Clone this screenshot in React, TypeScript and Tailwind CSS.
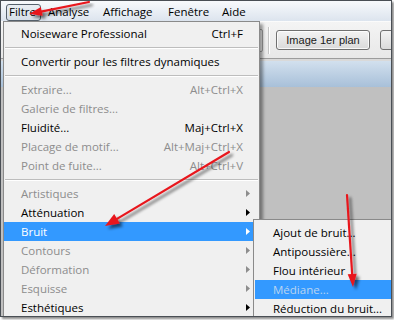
import React from "react";

const FONT = { fontFamily: '"Open Sans", "Noto Sans", Arial, sans-serif' };

type Item =
  | { kind: "sep" }
  | {
      kind: "item";
      label: string;
      shortcut?: string;
      disabled?: boolean;
      sub?: boolean;
      active?: boolean;
    };

const mainItems: Item[] = [
  { kind: "item", label: "Noiseware Professional", shortcut: "Ctrl+F" },
  { kind: "sep" },
  { kind: "item", label: "Convertir pour les filtres dynamiques" },
  { kind: "sep" },
  { kind: "item", label: "Extraire...", shortcut: "Alt+Ctrl+X", disabled: true },
  { kind: "item", label: "Galerie de filtres...", disabled: true },
  { kind: "item", label: "Fluidité...", shortcut: "Maj+Ctrl+X" },
  { kind: "item", label: "Placage de motif...", shortcut: "Alt+Maj+Ctrl+X", disabled: true },
  { kind: "item", label: "Point de fuite...", shortcut: "Alt+Ctrl+V", disabled: true },
  { kind: "sep" },
  { kind: "item", label: "Artistiques", sub: true, disabled: true },
  { kind: "item", label: "Atténuation", sub: true },
  { kind: "item", label: "Bruit", sub: true, active: true },
  { kind: "item", label: "Contours", sub: true, disabled: true },
  { kind: "item", label: "Déformation", sub: true, disabled: true },
  { kind: "item", label: "Esquisse", sub: true, disabled: true },
  { kind: "item", label: "Esthétiques", sub: true },
];

const subItems = [
  { label: "Ajout de bruit..." },
  { label: "Antipoussière..." },
  { label: "Flou intérieur" },
  { label: "Médiane...", active: true },
  { label: "Réduction du bruit..." },
];

function SubArrow({ color }: { color: string }) {
  return (
    <svg width="4" height="7" viewBox="0 0 4 7" className="block">
      <polygon points="0,0 4,3.5 0,7" fill={color} />
    </svg>
  );
}

function Arrow({ x1, y1, x2, y2, hl = 13, hw = 5 }: { x1: number; y1: number; x2: number; y2: number; hl?: number; hw?: number }) {
  const dx = x2 - x1;
  const dy = y2 - y1;
  const len = Math.hypot(dx, dy);
  const ux = dx / len;
  const uy = dy / len;
  const bx = x2 - ux * hl;
  const by = y2 - uy * hl;
  const px = -uy;
  const py = ux;
  const pts = `${x2},${y2} ${bx + px * hw},${by + py * hw} ${bx - px * hw},${by - py * hw}`;
  return (
    <g filter="url(#arrowShadow)">
      <line x1={x1} y1={y1} x2={bx + ux * 2} y2={by + uy * 2} stroke="#e8161c" strokeWidth="2.2" strokeLinecap="round" />
      <polygon points={pts} fill="#e8161c" />
    </g>
  );
}

export default function App() {
  return (
    <div className="relative w-[394px] h-[320px] bg-white overflow-hidden" style={FONT}>
      {/* framed screenshot */}
      <div className="relative w-[392px] h-[317px] border border-[#4a4f55] shadow-[2px_2px_2px_rgba(0,0,0,0.45)] overflow-hidden bg-[#c0c0c0] flex flex-col">
        {/* menubar */}
        <div className="h-[20px] shrink-0 flex items-end bg-gradient-to-b from-[#f8fafc] to-[#dce4ee] text-[11.5px] text-black">
          <div className="shrink-0 ml-[5px] w-[35px] h-[17px] rounded-[3px] border border-[#56616c] bg-gradient-to-b from-[#e9eef3] to-[#d6dee7] flex items-center pl-[2px] pb-[1px]">
            Filtre
          </div>
          <div className="shrink-0 ml-[7px] w-[55px] h-[17px] flex items-center pb-[1px]">Analyse</div>
          <div className="shrink-0 w-[65px] h-[17px] flex items-center pb-[1px]">Affichage</div>
          <div className="shrink-0 w-[54px] h-[17px] flex items-center pb-[1px]">Fenêtre</div>
          <div className="shrink-0 h-[17px] flex items-center pb-[1px]">Aide</div>
        </div>

        {/* toolbar */}
        <div className="h-[37px] shrink-0 border-t border-[#fbfbfb] bg-gradient-to-b from-[#f4f4f4] to-[#e8e8e8] flex items-center">
          <div className="shrink-0 ml-[199px] w-[63px] h-[23px] border border-[#a5a5a5] bg-[#fafafa] rounded-[2px]" />
          <div className="shrink-0 ml-[5px] w-[2px] h-[27px] flex">
            <div className="w-[1px] h-full bg-[#c4c4c4]" />
            <div className="w-[1px] h-full bg-white" />
          </div>
          <div
            className="shrink-0 ml-[6px] w-[94px] h-[20px] rounded-[3px] border border-[#707070] bg-gradient-to-b from-[#f3f3f3] to-[#dadada] flex items-center justify-center text-[11px] text-[#1a1a1a] shadow-[inset_0_0_0_1px_rgba(255,255,255,0.8)]"
            style={{ fontFamily: '"Liberation Sans", Arial, sans-serif' }}
          >
            Image 1er plan
          </div>
          <div className="shrink-0 ml-[10px] w-[60px] h-[20px] rounded-[3px] border border-[#707070] bg-gradient-to-b from-[#f3f3f3] to-[#dadada]" />
        </div>
        <div className="h-[1px] shrink-0 bg-[#9c9c9c]" />
        <div className="h-[2px] shrink-0 bg-[#d9d9d9]" />
        <div className="h-[26px] shrink-0 bg-gradient-to-b from-[#d2e0ee] to-[#a8c0d9]" />
        <div className="flex-1 bg-[#c0c0c0]" />

        {/* main dropdown */}
        <div className="absolute left-[2px] top-[20px] w-[257px] h-[320px] bg-[#f0f0f0] border border-[#8a8a8a] shadow-[3px_3px_3px_rgba(0,0,0,0.4)] pt-[2px] text-[11.5px] z-10">
          {mainItems.map((it, i) =>
            it.kind === "sep" ? (
              <div key={i} className="h-[9px] flex flex-col justify-center mx-[1px]">
                <div className="h-[1px] bg-[#bdbdbd]" />
                <div className="h-[1px] bg-white" />
              </div>
            ) : (
              <div
                key={i}
                className={
                  "h-[19px] flex items-center pl-[17px] " +
                  (it.active ? "bg-[#3399ff] text-white" : it.disabled ? "text-[#8d8d8d]" : "text-black")
                }
              >
                <span className="flex-1 whitespace-nowrap">{it.label}</span>
                {it.shortcut && <span className="whitespace-nowrap">{it.shortcut}</span>}
                <span className="shrink-0 w-[16px] h-[19px] flex items-center pl-[3px]">
                  {it.sub && <SubArrow color={it.active ? "#ffffff" : it.disabled ? "#8d8d8d" : "#000000"} />}
                </span>
              </div>
            )
          )}
        </div>

        {/* submenu */}
        <div className="absolute left-[252px] top-[218px] w-[150px] h-[120px] bg-[#f0f0f0] border border-[#8a8a8a] shadow-[3px_3px_3px_rgba(0,0,0,0.4)] pt-[3px] text-[11.5px] z-20">
          {subItems.map((s, i) => (
            <div
              key={i}
              className={
                "h-[19px] flex items-center pl-[18px] ml-[1px] " +
                (s.active ? "bg-[#3399ff] text-[#b9d4f1]" : "text-black")
              }
            >
              <span className="whitespace-nowrap">{s.label}</span>
            </div>
          ))}
        </div>
      </div>

      {/* red annotation arrows */}
      <svg className="absolute inset-0 pointer-events-none z-30" width="394" height="320" viewBox="0 0 394 320">
        <defs>
          <filter id="arrowShadow" filterUnits="userSpaceOnUse" x="0" y="0" width="394" height="320">
            <feGaussianBlur in="SourceAlpha" stdDeviation="1.8" />
            <feOffset dx="3" dy="3" result="b" />
            <feComponentTransfer>
              <feFuncA type="linear" slope="0.55" />
            </feComponentTransfer>
            <feMerge>
              <feMergeNode />
              <feMergeNode in="SourceGraphic" />
            </feMerge>
          </filter>
        </defs>
        <Arrow x1={89} y1={2} x2={29} y2={14} hl={13} hw={4.5} />
        <Arrow x1={229} y1={152} x2={105} y2={226} hl={14} hw={5.5} />
        <Arrow x1={347} y1={195} x2={353} y2={287} hl={13} hw={4.5} />
      </svg>
    </div>
  );
}
